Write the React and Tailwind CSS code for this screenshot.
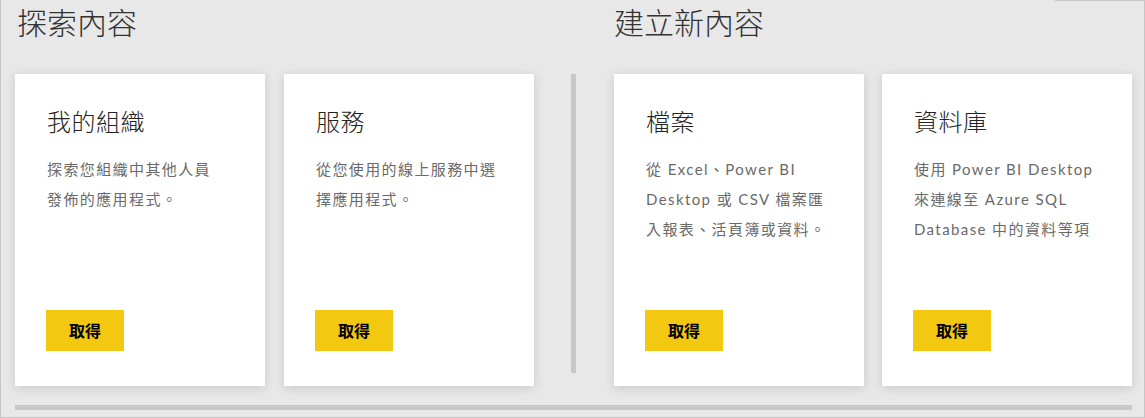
import React from "react";

const font = { fontFamily: '"Noto Sans", "Noto Sans CJK TC", sans-serif' };
const descFont = { fontFamily: 'Lato, "Noto Sans CJK TC", sans-serif' };

function Card({ title, lines }) {
  return (
    <div className="flex h-[312px] w-[250px] flex-col bg-white px-[32px] pb-[35px] pt-[30px] shadow-[0_2px_10px_rgba(0,0,0,0.14)]">
      <div className="text-[24px] font-light leading-[36px] tracking-[0.5px] text-[#252423]">{title}</div>
      <div style={descFont} className="mt-[14px] text-[15px] font-normal leading-[30px] tracking-[1.4px] text-[#6a6a6a]">
        {lines.map((l, i) => (
          <div key={i} className="whitespace-nowrap">{l}</div>
        ))}
      </div>
      <div className="mt-auto">
        <button className="h-[41px] w-[78px] -ml-[1px] bg-[#f2c811] text-[16px] font-bold text-black">取得</button>
      </div>
    </div>
  );
}

export default function App() {
  return (
    <div style={font} className="relative h-[418px] w-[1145px] overflow-hidden border-b border-l border-r border-[#c6c6c6] bg-[#e8e8e8]">
      <div className="flex h-px justify-end">
        <div className="h-px w-[89px] bg-[#c6c6c6]" />
      </div>
      <div className="flex pl-[14px] pt-[2px]">
        <div className="flex flex-col">
          <div className="pl-[2px] text-[30px] font-light leading-[40px] text-[#333333]">探索內容</div>
          <div className="mt-[31px] flex gap-[19px]">
            <Card title="我的組織" lines={["探索您組織中其他人員", "發佈的應用程式。"]} />
            <Card title="服務" lines={["從您使用的線上服務中選", "擇應用程式。"]} />
          </div>
        </div>
        <div className="ml-[37px] mt-[71px] h-[299px] w-[5px] bg-[#c8c8c8]" />
        <div className="ml-[38px] flex flex-col">
          <div className="text-[30px] font-light leading-[40px] text-[#333333]">建立新內容</div>
          <div className="mt-[31px] flex gap-[18px]">
            <Card title="檔案" lines={["從 Excel、Power BI", "Desktop 或 CSV 檔案匯", "入報表、活頁簿或資料。"]} />
            <Card title="資料庫" lines={["使用 Power BI Desktop", "來連線至 Azure SQL", "Database 中的資料等項"]} />
          </div>
        </div>
      </div>
      <div className="ml-[14px] mt-[19px] h-[5px] w-[1117px] bg-[#c8c8c8]" />
    </div>
  );
}
